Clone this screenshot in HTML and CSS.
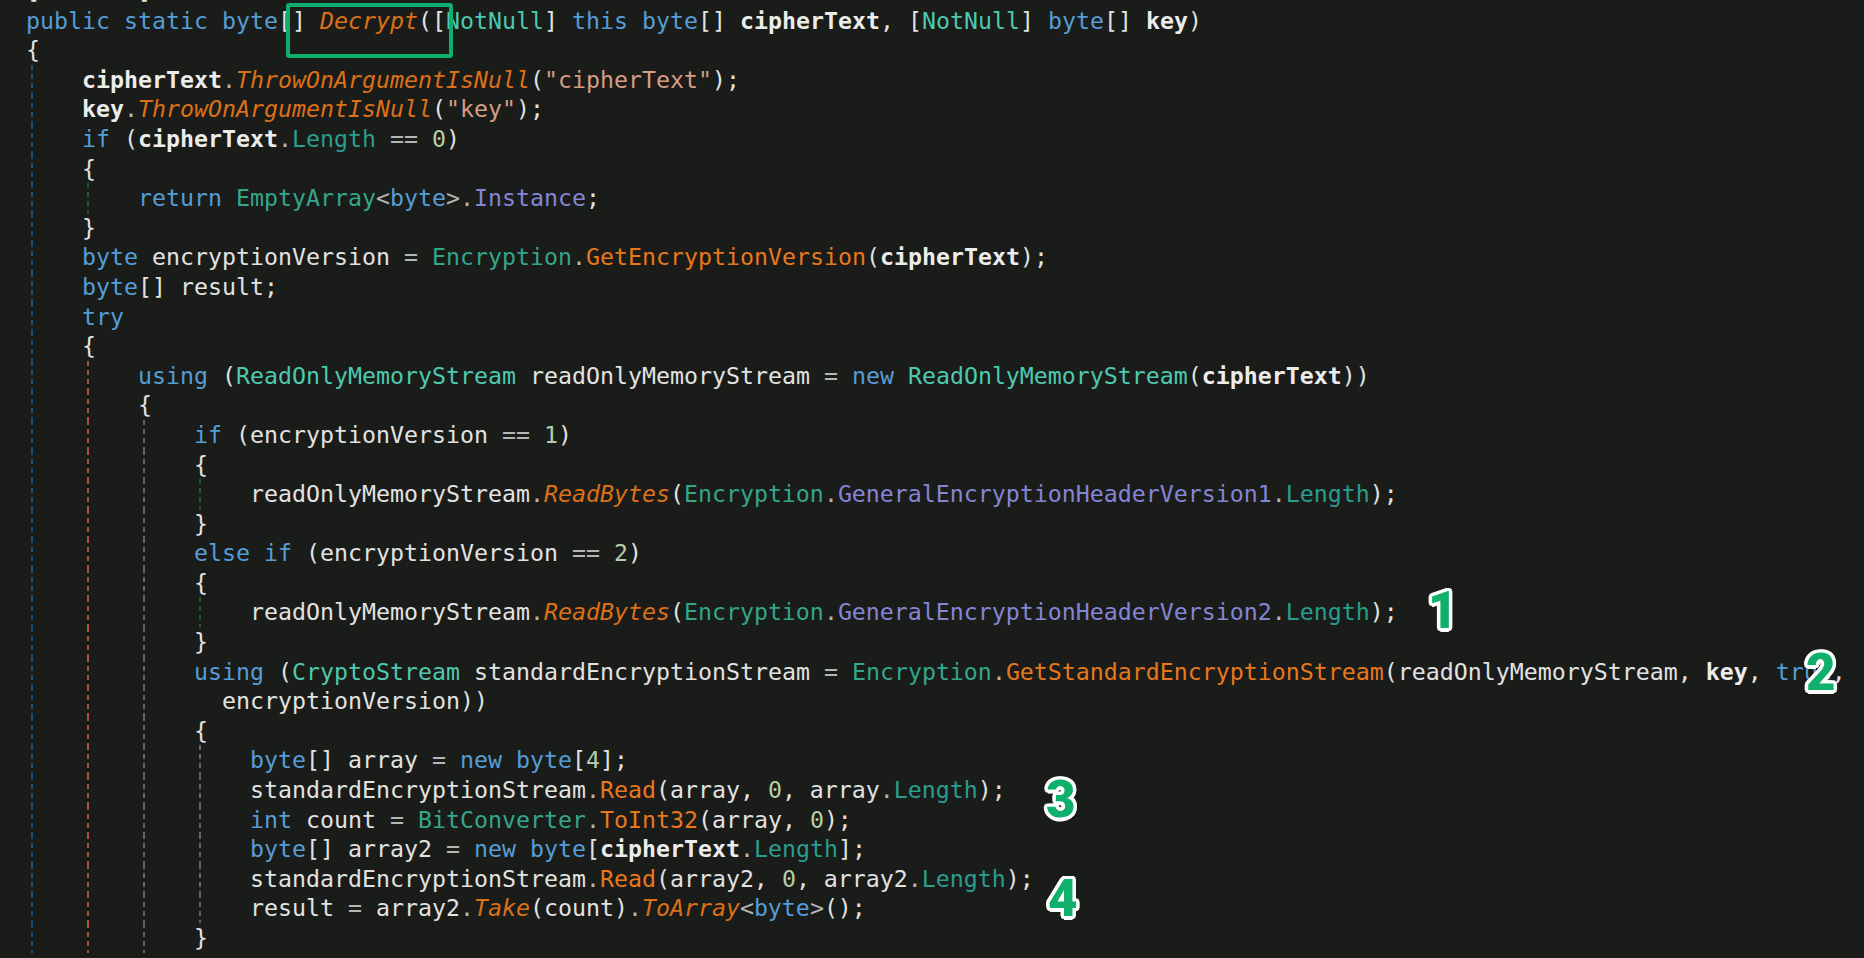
FILE: index.html
```html
<!DOCTYPE html>
<html lang="en">
<head>
    <meta charset="UTF-8">
    <title>Decrypt</title>
    <link rel="stylesheet" href="styles.css">
</head>
<body>
<div class="editor">
    <div class="code">
<div class="ln">[<span class="t">NotNull</span>]</div>
<div class="ln"><span class="k">public</span> <span class="k">static</span> <span class="k">byte</span>[] <span class="fi">Decrypt</span>([<span class="t">NotNull</span>] <span class="k">this</span> <span class="k">byte</span>[] <b>cipherText</b>, [<span class="t">NotNull</span>] <span class="k">byte</span>[] <b>key</b>)</div>
<div class="ln">{</div>
<div class="ln"><i class="g gb"></i><b>cipherText</b><span class="o">.</span><span class="fi">ThrowOnArgumentIsNull</span>(<span class="s">"cipherText"</span>);</div>
<div class="ln"><i class="g gb"></i><b>key</b><span class="o">.</span><span class="fi">ThrowOnArgumentIsNull</span>(<span class="s">"key"</span>);</div>
<div class="ln"><i class="g gb"></i><span class="k">if</span> (<b>cipherText</b><span class="o">.</span><span class="p">Length</span> <span class="o">==</span> <span class="n">0</span>)</div>
<div class="ln"><i class="g gb"></i>{</div>
<div class="ln"><i class="g gb"></i><i class="g gg"></i><span class="k">return</span> <span class="ts">EmptyArray</span><span class="o">&lt;</span><span class="k">byte</span><span class="o">&gt;.</span><span class="ps">Instance</span>;</div>
<div class="ln"><i class="g gb"></i>}</div>
<div class="ln"><i class="g gb"></i><span class="k">byte</span> encryptionVersion <span class="o">=</span> <span class="ts">Encryption</span><span class="o">.</span><span class="f">GetEncryptionVersion</span>(<b>cipherText</b>);</div>
<div class="ln"><i class="g gb"></i><span class="k">byte</span>[] result;</div>
<div class="ln"><i class="g gb"></i><span class="k">try</span></div>
<div class="ln"><i class="g gb"></i>{</div>
<div class="ln"><i class="g gb"></i><i class="g gr"></i><span class="k">using</span> (<span class="t">ReadOnlyMemoryStream</span> readOnlyMemoryStream <span class="o">=</span> <span class="k">new</span> <span class="t">ReadOnlyMemoryStream</span>(<b>cipherText</b>))</div>
<div class="ln"><i class="g gb"></i><i class="g gr"></i>{</div>
<div class="ln"><i class="g gb"></i><i class="g gr"></i><i class="g gy"></i><span class="k">if</span> (encryptionVersion <span class="o">==</span> <span class="n">1</span>)</div>
<div class="ln"><i class="g gb"></i><i class="g gr"></i><i class="g gy"></i>{</div>
<div class="ln"><i class="g gb"></i><i class="g gr"></i><i class="g gy"></i><i class="g gg"></i>readOnlyMemoryStream<span class="o">.</span><span class="fi">ReadBytes</span>(<span class="ts">Encryption</span><span class="o">.</span><span class="ps">GeneralEncryptionHeaderVersion1</span><span class="o">.</span><span class="p">Length</span>);</div>
<div class="ln"><i class="g gb"></i><i class="g gr"></i><i class="g gy"></i>}</div>
<div class="ln"><i class="g gb"></i><i class="g gr"></i><i class="g gy"></i><span class="k">else</span> <span class="k">if</span> (encryptionVersion <span class="o">==</span> <span class="n">2</span>)</div>
<div class="ln"><i class="g gb"></i><i class="g gr"></i><i class="g gy"></i>{</div>
<div class="ln"><i class="g gb"></i><i class="g gr"></i><i class="g gy"></i><i class="g gg"></i>readOnlyMemoryStream<span class="o">.</span><span class="fi">ReadBytes</span>(<span class="ts">Encryption</span><span class="o">.</span><span class="ps">GeneralEncryptionHeaderVersion2</span><span class="o">.</span><span class="p">Length</span>);</div>
<div class="ln"><i class="g gb"></i><i class="g gr"></i><i class="g gy"></i>}</div>
<div class="ln"><i class="g gb"></i><i class="g gr"></i><i class="g gy"></i><span class="k">using</span> (<span class="t">CryptoStream</span> standardEncryptionStream <span class="o">=</span> <span class="ts">Encryption</span><span class="o">.</span><span class="f">GetStandardEncryptionStream</span>(readOnlyMemoryStream, <b>key</b>, <span class="k">true</span>,</div>
<div class="ln"><i class="g gb"></i><i class="g gr"></i><i class="g gy"></i>  encryptionVersion))</div>
<div class="ln"><i class="g gb"></i><i class="g gr"></i><i class="g gy"></i>{</div>
<div class="ln"><i class="g gb"></i><i class="g gr"></i><i class="g gy"></i><i class="g gy"></i><span class="k">byte</span>[] array <span class="o">=</span> <span class="k">new</span> <span class="k">byte</span>[<span class="n">4</span>];</div>
<div class="ln"><i class="g gb"></i><i class="g gr"></i><i class="g gy"></i><i class="g gy"></i>standardEncryptionStream<span class="o">.</span><span class="f">Read</span>(array, <span class="n">0</span>, array<span class="o">.</span><span class="p">Length</span>);</div>
<div class="ln"><i class="g gb"></i><i class="g gr"></i><i class="g gy"></i><i class="g gy"></i><span class="k">int</span> count <span class="o">=</span> <span class="ts">BitConverter</span><span class="o">.</span><span class="f">ToInt32</span>(array, <span class="n">0</span>);</div>
<div class="ln"><i class="g gb"></i><i class="g gr"></i><i class="g gy"></i><i class="g gy"></i><span class="k">byte</span>[] array2 <span class="o">=</span> <span class="k">new</span> <span class="k">byte</span>[<b>cipherText</b><span class="o">.</span><span class="p">Length</span>];</div>
<div class="ln"><i class="g gb"></i><i class="g gr"></i><i class="g gy"></i><i class="g gy"></i>standardEncryptionStream<span class="o">.</span><span class="f">Read</span>(array2, <span class="n">0</span>, array2<span class="o">.</span><span class="p">Length</span>);</div>
<div class="ln"><i class="g gb"></i><i class="g gr"></i><i class="g gy"></i><i class="g gy"></i>result <span class="o">=</span> array2<span class="o">.</span><span class="fi">Take</span>(count)<span class="o">.</span><span class="fi">ToArray</span><span class="o">&lt;</span><span class="k">byte</span><span class="o">&gt;</span>();</div>
<div class="ln"><i class="g gb"></i><i class="g gr"></i><i class="g gy"></i>}</div>
    </div>

    <div class="mark"></div>
    <span class="badge b1">1</span>
    <span class="badge b2">2</span>
    <span class="badge b3">3</span>
    <span class="badge b4">4</span>
</div>
</body>
</html>
```

FILE: styles.css
```css
*{ margin: 0; padding: 0; }
html,body{
    height: 100%;
    overflow: hidden;
    background: #191c19;
}
.editor{
    position: relative;
    height: 100%;
    overflow: hidden;
}
.code{
    margin-top: -24px;
    padding-left: 26px;
    font-family: "DejaVu Sans Mono", "Liberation Mono", monospace;
    font-size: 23.25px;
    line-height: 29.6px;
    color: #e2e2e2;
}
.ln{
    height: 29.6px;
    white-space: pre;
}
.code b{
    font-weight: bold;
    color: #ececec;
}

/* indent guides */
.g{
    position: relative;
    display: inline-block;
    width: 4ch;
    height: 29.6px;
    vertical-align: top;
}
.g:before{
    content: "";
    position: absolute;
    left: 5px;
    top: 0;
    bottom: 0;
    width: 2px;
    background: repeating-linear-gradient(to bottom, var(--c) 0 5px, transparent 5px 9px);
}
.gb{ --c: #1d4d70; }
.gr{ --c: #b0503f; }
.gy{ --c: #5f6260; }
.gg{ --c: #1f5a26; }

/* syntax */
.k{ color: #569cd6; }
.f{ color: #e8781c; }
.fi{ color: #dc7018; font-style: italic; }
.t{ color: #4ec9b0; }
.ts{ color: #34a68c; }
.p{ color: #2a9d8f; }
.ps{ color: #8585d6; }
.s{ color: #d69d85; }
.n{ color: #b5cea8; }
.o{ color: #b4b4b4; }

/* annotations */
.mark{
    position: absolute;
    left: 286px;
    top: 3px;
    width: 167px;
    height: 55px;
    box-sizing: border-box;
    border: 4px solid #10ae6c;
    border-radius: 3px;
}
.badge{
    position: absolute;
    font-family: Roboto, "Liberation Sans", sans-serif;
    font-weight: 900;
    font-size: 51px;
    line-height: 50px;
    color: #0fb06b;
    text-shadow:
        3.5px 0 0 #fff, 3px 1.75px 0 #fff, 1.75px 3px 0 #fff, 0 3.5px 0 #fff,
        -1.75px 3px 0 #fff, -3px 1.75px 0 #fff, -3.5px 0 0 #fff, -3px -1.75px 0 #fff,
        -1.75px -3px 0 #fff, 0 -3.5px 0 #fff, 1.75px -3px 0 #fff, 3px -1.75px 0 #fff;
}
.b1{ left: 1428px; top: 586px; }
.b2{ left: 1806px; top: 648px; }
.b3{ left: 1046px; top: 775px; }
.b4{ left: 1048px; top: 874px; }
```
